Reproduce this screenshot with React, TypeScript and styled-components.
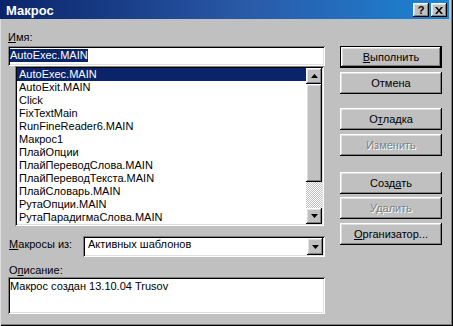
import React from 'react';
import styled, { createGlobalStyle, css } from 'styled-components';

const GlobalStyle = createGlobalStyle`
  html, body { margin: 0; padding: 0; background: #c0c0c0; }
  body {
    font-family: "Liberation Sans", Arial, sans-serif;
    font-size: 11px;
    line-height: 13px;
    color: #000;
  }
`;

const raised = css`
  box-shadow: inset -1px -1px #000, inset 1px 1px #fff, inset -2px -2px #808080, inset 2px 2px #dfdfdf;
`;

const sunken = css`
  box-shadow: inset 1px 1px #808080, inset -1px -1px #fff, inset 2px 2px #000, inset -2px -2px #dfdfdf;
`;

const Window = styled.div`
  width: 453px;
  height: 326px;
  box-sizing: border-box;
  padding: 0 4px 3px 0;
  background: #c0c0c0;
  box-shadow: inset 1px 0 #dfdfdf, inset -1px -1px #000, inset -2px -2px #808080;
  display: flex;
  flex-direction: column;
`;

const TitleBar = styled.div`
  height: 19px;
  box-sizing: border-box;
  display: flex;
  align-items: flex-start;
  padding: 0 2px 0 6px;
  background: linear-gradient(to right, #0a246a 0%, #2a5aa8 55%, #1c84d4 100%);
  color: #fff;
`;

const Title = styled.div`
  flex: 1;
  font-weight: bold;
  font-size: 13px;
  line-height: 15px;
  padding-top: 3px;
`;

const CaptionButtons = styled.div`
  display: flex;
  gap: 2px;
  margin-top: 3px;
`;

const CaptionButton = styled.div`
  width: 16px;
  height: 14px;
  background: #c0c0c0;
  ${raised};
  display: flex;
  align-items: center;
  justify-content: center;
  color: #000;
  font-weight: bold;
  font-size: 11px;
  line-height: 11px;
`;

const Body = styled.div`
  flex: 1;
  display: flex;
  padding: 12px 0 0 8px;
`;

const LeftColumn = styled.div`
  width: 317px;
  display: flex;
  flex-direction: column;
`;

const Label = styled.div`
  height: 13px;
`;

const NameInput = styled.div`
  height: 20px;
  box-sizing: border-box;
  margin-top: 2px;
  padding: 3px 2px 0;
  background: #fff;
  ${sunken};
`;

const Selected = styled.span`
  background: #0a246a;
  color: #fff;
  display: inline-block;
  height: 13px;
`;

const ListBox = styled.div`
  margin-left: 7px;
  width: 309px;
  height: 160px;
  box-sizing: border-box;
  padding: 2px;
  background: #fff;
  ${sunken};
  display: flex;
`;

const Items = styled.div`
  flex: 1;
  display: flex;
  flex-direction: column;
`;

const Item = styled.div<{ $active?: boolean }>`
  height: 13px;
  padding-left: 2px;
  white-space: nowrap;
  background: ${(p) => (p.$active ? '#0a246a' : 'transparent')};
  color: ${(p) => (p.$active ? '#fff' : '#000')};
`;

const ScrollBar = styled.div`
  width: 16px;
  display: flex;
  flex-direction: column;
`;

const ArrowButton = styled.div`
  width: 16px;
  height: 16px;
  background: #c0c0c0;
  ${raised};
  display: flex;
  align-items: center;
  justify-content: center;
  flex-shrink: 0;
`;

const Thumb = styled.div`
  height: 98px;
  background: #c0c0c0;
  ${raised};
`;

const Track = styled.div`
  flex: 1;
  background: repeating-conic-gradient(#c0c0c0 0 25%, #ffffff 0 50%) 0 0 / 2px 2px;
`;

const SourceRow = styled.div`
  display: flex;
  margin-top: 10px;
`;

const RowLabel = styled.div`
  width: 74px;
  padding: 2px 0 0 1px;
`;

const Select = styled.div`
  flex: 1;
  height: 21px;
  box-sizing: border-box;
  padding: 2px;
  background: #fff;
  ${sunken};
  display: flex;
`;

const SelectValue = styled.div`
  flex: 1;
  padding: 0 0 0 3px;
`;

const DropButton = styled(ArrowButton)`
  height: 17px;
`;

const DescLabel = styled.div`
  height: 13px;
  margin-top: 7px;
  padding-left: 1px;
`;

const DescBox = styled.div`
  height: 37px;
  box-sizing: border-box;
  padding: 3px 2px 0;
  background: #fff;
  ${sunken};
`;

const RightColumn = styled.div`
  width: 102px;
  margin-left: 15px;
  padding-top: 15px;
  display: flex;
  flex-direction: column;
`;

const Button = styled.div<{ $gap?: number; $default?: boolean; $disabled?: boolean }>`
  height: 22px;
  box-sizing: border-box;
  margin-top: ${(p) => p.$gap ?? 4}px;
  background: #c0c0c0;
  display: flex;
  align-items: center;
  justify-content: center;
  ${(p) =>
    p.$default
      ? css`
          border: 1px solid #000;
          box-shadow: inset -1px -1px #000, inset 1px 1px #fff, inset -2px -2px #808080, inset 2px 2px #dfdfdf;
        `
      : raised};
  color: ${(p) => (p.$disabled ? '#808080' : '#000')};
  text-shadow: ${(p) => (p.$disabled ? '1px 1px 0 #fff' : 'none')};
`;

const Mn = styled.span`
  text-decoration: underline;
`;

const ArrowUp = () => (
  <svg width="7" height="4" viewBox="0 0 7 4">
    <polygon points="3.5,0 7,4 0,4" fill="#000" />
  </svg>
);

const ArrowDown = () => (
  <svg width="7" height="4" viewBox="0 0 7 4">
    <polygon points="0,0 7,0 3.5,4" fill="#000" />
  </svg>
);

const CloseGlyph = () => (
  <svg width="8" height="7" viewBox="0 0 8 7">
    <path d="M0 0h2l2 2.5L6 0h2L5 3.5 8 7H6L4 4.5 2 7H0l3-3.5z" fill="#000" />
  </svg>
);

const macros = [
  'AutoExec.MAIN',
  'AutoExit.MAIN',
  'Click',
  'FixTextMain',
  'RunFineReader6.MAIN',
  'Макрос1',
  'ПлайОпции',
  'ПлайПереводСлова.MAIN',
  'ПлайПереводТекста.MAIN',
  'ПлайСловарь.MAIN',
  'РутаОпции.MAIN',
  'РутаПарадигмаСлова.MAIN',
];

const App: React.FC = () => {
  return (
    <>
      <GlobalStyle />
      <Window>
        <TitleBar>
          <Title>Макрос</Title>
          <CaptionButtons>
            <CaptionButton>?</CaptionButton>
            <CaptionButton>
              <CloseGlyph />
            </CaptionButton>
          </CaptionButtons>
        </TitleBar>

        <Body>
          <LeftColumn>
            <Label>
              <Mn>И</Mn>мя:
            </Label>
            <NameInput>
              <Selected>AutoExec.MAIN</Selected>
            </NameInput>

            <ListBox>
              <Items>
                {macros.map((m, i) => (
                  <Item key={m} $active={i === 0}>
                    {m}
                  </Item>
                ))}
              </Items>
              <ScrollBar>
                <ArrowButton>
                  <ArrowUp />
                </ArrowButton>
                <Thumb />
                <Track />
                <ArrowButton>
                  <ArrowDown />
                </ArrowButton>
              </ScrollBar>
            </ListBox>

            <SourceRow>
              <RowLabel>
                <Mn>М</Mn>акросы из:
              </RowLabel>
              <Select>
                <SelectValue>Активных шаблонов</SelectValue>
                <DropButton>
                  <ArrowDown />
                </DropButton>
              </Select>
            </SourceRow>

            <DescLabel>
              О<Mn>п</Mn>исание:
            </DescLabel>
            <DescBox>Макрос создан 13.10.04 Trusov</DescBox>
          </LeftColumn>

          <RightColumn>
            <Button $default $gap={0}>
              <Mn>В</Mn>ыполнить
            </Button>
            <Button>Отмена</Button>
            <Button $gap={14}>
              О<Mn>т</Mn>ладка
            </Button>
            <Button $disabled>Изменить</Button>
            <Button $gap={16}>
              Созд<Mn>а</Mn>ть
            </Button>
            <Button $gap={3} $disabled>
              Удалить
            </Button>
            <Button>
              <Mn>О</Mn>рганизатор...
            </Button>
          </RightColumn>
        </Body>
      </Window>
    </>
  );
};

export default App;
